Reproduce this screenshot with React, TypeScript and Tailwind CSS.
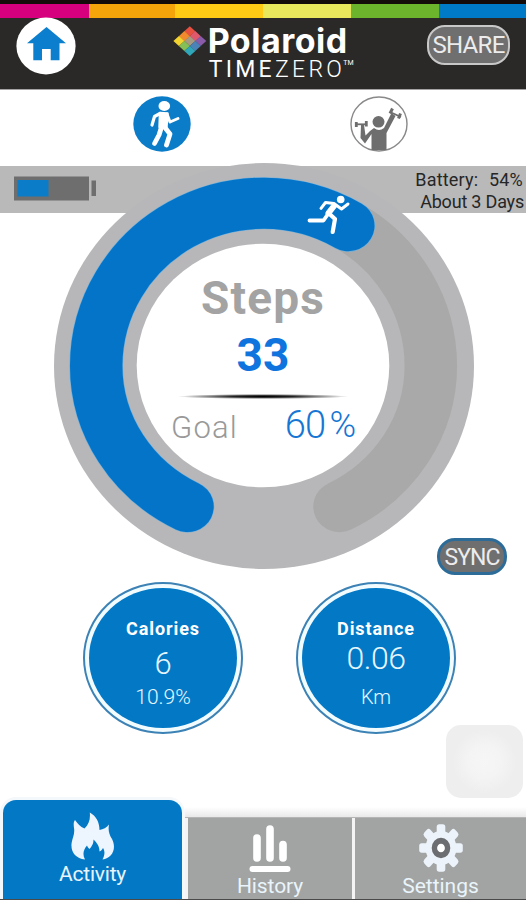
import type { ReactNode } from 'react';

const STRIPES = ['bg-[#d6007f]', 'bg-[#f5a50a]', 'bg-[#ffcb14]', 'bg-[#e9e85c]', 'bg-[#6cb42c]', 'bg-[#007ac6]'];

function HomeIcon() {
  return (
    <svg viewBox="0 0 60 58" className="h-[58px] w-[60px]">
      <ellipse cx="30" cy="29" rx="29.6" ry="28.4" fill="#fff" />
      <path d="M30.5 10 L50 26.3 H43.5 V43.3 H34.7 V32 H26 V43.3 H17.3 V26.3 H11 Z" fill="#0b7fcd" />
    </svg>
  );
}

function PrismLogo() {
  const colors = ['#e8503f', '#e0586c', '#8a5ba8', '#f08a2c', '#a79a80', '#4b83b8', '#f3d32f', '#86bf56', '#2fa7b8'];
  return (
    <svg viewBox="0 0 34 32" className="h-8 w-[34px]">
      <g transform="translate(17 1) scale(1.1 1) rotate(45)">
        {colors.map((color, i) => (
          <rect key={i} x={(i % 3) * 7.07} y={Math.floor(i / 3) * 7.07} width="7.2" height="7.2" fill={color} />
        ))}
      </g>
    </svg>
  );
}

function WalkIcon() {
  return (
    <svg viewBox="0 0 58 56" className="h-14 w-[58px]">
      <ellipse cx="29" cy="28" rx="28.7" ry="27.7" fill="#0b7cc8" />
      <g fill="none" stroke="#fff" strokeLinecap="round" strokeLinejoin="round">
        <ellipse cx="31.3" cy="10" rx="5.8" ry="5" fill="#fff" stroke="none" />
        <path d="M27 17.5 L21.5 20.5 L19 29" strokeWidth="3.2" />
        <path d="M34 18 L37 26 L45 22.5" strokeWidth="3" />
        <path d="M27 17 L34.5 17.5 L33.5 31 L26.5 31 Z" fill="#fff" strokeWidth="2.4" />
        <path d="M28.5 31 L26 39 L21.5 47.5" strokeWidth="4.8" />
        <path d="M31.5 31 L37 38 L33.5 49" strokeWidth="4.8" />
      </g>
    </svg>
  );
}

function WorkoutIcon() {
  return (
    <svg viewBox="0 0 58 56" className="h-14 w-[58px]">
      <ellipse cx="29" cy="28" rx="28" ry="27" fill="#fff" stroke="#8a8888" strokeWidth="1.4" />
      <g fill="none" stroke="#6f6e6e">
        <ellipse cx="28.5" cy="25.8" rx="6" ry="5.8" fill="#6f6e6e" stroke="none" />
        <path d="M21.5 54 V38 L15 47.5 L10.5 42 L11 29 L14 29 L15.5 39.5 L20 35 L24 32 Q29 36 34 32 L41.5 17 L45.5 20 L36.5 37 V54 Z" fill="#6f6e6e" stroke="none" />
        <path d="M5.5 28.3 H17" strokeWidth="1.8" />
        <path d="M6.3 26 V31 M16.3 25 V30.5" strokeWidth="2.8" />
        <path d="M40 16 L51 21" strokeWidth="1.8" />
        <path d="M42.5 12.5 L40 17.5 M50.5 17.5 L48.5 22.5" strokeWidth="3" />
      </g>
    </svg>
  );
}

function Battery() {
  return (
    <svg viewBox="0 0 84 26" className="mt-[10px] ml-[13px] h-[26px] w-[84px]">
      <rect x="1" y="0.5" width="75" height="24" fill="#6e6e6e" />
      <rect x="4.5" y="4" width="31" height="16.5" fill="#0b7cc8" />
      <rect x="78.5" y="4.5" width="4.5" height="15.5" fill="#6e6e6e" />
    </svg>
  );
}

function Dial() {
  const progress = 'M-76 144.5 A167.3 162.2 0 0 1 -167.3 0 A167.3 167.3 0 0 1 84.8 -144.2';
  return (
    <svg viewBox="0 163 526 406" className="col-start-1 row-start-1 h-[406px] w-[526px]">
      <ellipse cx="264" cy="366" rx="210" ry="203" fill="#b7b7b9" />
      <ellipse cx="263" cy="365.5" rx="126.3" ry="121.8" fill="#fff" />
      <g transform="translate(263.5 366) scale(1 0.973)" fill="none" strokeLinecap="round">
        <path d="M84.8 -144.2 A167.3 167.3 0 0 1 167.3 0 A167.3 162.2 0 0 1 76 144.5" stroke="#a9a9a9" strokeWidth="52.5" />
        <path d={progress} stroke="#6fb0dc" strokeWidth="53.6" />
        <path d={progress} stroke="#0374c8" strokeWidth="52.4" />
      </g>
      <g fill="none" stroke="#fff" strokeLinecap="round" strokeLinejoin="round">
        <circle cx="340.7" cy="199.5" r="3.8" fill="#fff" stroke="none" />
        <path d="M321 208.3 L325.5 202.5 L334 203.5 L341.5 209 L348 204" strokeWidth="3" />
        <path d="M334 206 L328.5 213" strokeWidth="6" />
        <path d="M328 214 L323.5 220.5 L309.5 220.5" strokeWidth="3.8" />
        <path d="M329 213.5 L335 219 L332.7 232" strokeWidth="4.2" />
      </g>
    </svg>
  );
}

function Stat({ title, children }: { title: string; children: ReactNode }) {
  return (
    <div className="h-[152px] w-[160px] rounded-[50%] border-2 border-[#3d82b5] bg-[#f2fcff] p-[4px]">
      <div className="flex h-full flex-col items-center rounded-[50%] bg-[#0379c6] pt-[31px] text-[#e6f7ff]">
        <h3 className="text-[18px] leading-[20px] font-bold tracking-[0.9px] text-white">{title}</h3>
        {children}
      </div>
    </div>
  );
}

function FlameIcon() {
  return (
    <svg viewBox="0 0 44 48" className="h-12 w-11">
      <path
        d="M18.8 0.5 C25 4 28.5 10 28.5 18 C32 17.5 36 15.5 38 12.5 C37 18 38 22 41 27 C46 37 41 46 31.5 47.5 C34 43 34 39 32 36 C31 38 30 39 28.5 39.5 C28.5 34 26 31 22.5 27.5 C22.5 32 21 34 18.5 37 C17.5 36 16.5 35 16 33.5 C12 38 11.5 43 14 47.5 C4 46.5 -1 39 0.8 30 C1.5 26 4 22 3 16 C2.5 12 2.5 10 4 8 C7 12 9 14.5 13.5 16.5 C18 12 19.5 7 18.8 0.5 Z"
        fill="#edf5ff"
      />
    </svg>
  );
}

function ChartIcon() {
  return (
    <svg viewBox="0 0 44 50" className="h-[50px] w-11">
      <g stroke="#fff" strokeLinecap="round">
        <path d="M9 14 V34 M22 5 V34 M35 20.5 V34" strokeWidth="7.6" />
        <path d="M4.5 45 H39.5" strokeWidth="6" />
      </g>
    </svg>
  );
}

function GearIcon() {
  return (
    <svg viewBox="0 0 44 48" className="h-12 w-11">
      <g transform="translate(22 24) scale(1 1.09)">
        {[0, 45, 90, 135].map((a) => (
          <rect key={a} x="-4.3" y="-21.8" width="8.6" height="43.6" rx="2.5" fill="#edf3fb" transform={`rotate(${a})`} />
        ))}
        <circle r="15.5" fill="#edf3fb" />
        <circle r="6.6" fill="#fff" stroke="#6b6d70" strokeWidth="5.4" />
      </g>
    </svg>
  );
}

export default function App() {
  return (
    <div className="relative flex h-[900px] w-[526px] flex-col overflow-hidden bg-white font-['Roboto',sans-serif]">
      <header className="h-[90px] border-b border-[#a5a3a4] bg-[#2a2928]">
        <div className="grid h-[18px] grid-cols-[89px_86px_88px_88px_88px_87px] border-t-[4px] border-[#130c0b]">
          {STRIPES.map((stripe) => (
            <div key={stripe} className={stripe} />
          ))}
        </div>
        <div className="flex items-start">
          <button className="-mt-px ml-4">
            <HomeIcon />
          </button>
          <div className="mt-[7px] ml-[97px] flex w-[182px]">
            <PrismLogo />
            <div className="w-[150px] whitespace-nowrap text-white">
              <div className="ml-px font-['Inter',sans-serif] text-[34px] leading-[32px] font-bold tracking-[0.5px]">Polaroid</div>
              <div className="-mt-px ml-0.5 flex text-[23px] leading-[27px] tracking-[3.3px]">
                <span>TIME</span>
                <span className="font-light">ZERO</span>
                <span className="-ml-0.5 text-[7px] leading-[14px] tracking-normal">TM</span>
              </div>
            </div>
          </div>
          <button className="mt-[7px] ml-[72px] h-10 w-[83px] rounded-[18px] border-2 border-[#c9c8c8] bg-[#706f70] text-[24px] leading-[37px] tracking-[-0.7px] text-[#ececec]">
            SHARE
          </button>
        </div>
      </header>

      <nav className="flex h-[73px] items-start justify-between pt-[6px] pr-[118px] pl-[133px]">
        <WalkIcon />
        <WorkoutIcon />
      </nav>

      <section className="grid h-[419px] grid-cols-1 grid-rows-1">
        <div className="col-start-1 row-start-1 mt-[3px] flex h-[47px] justify-between bg-[#b9b9ba]">
          <Battery />
          <div className="pt-[3px] pr-[3px] text-right text-[18px] leading-[22px] text-[#262626]">
            <p className="tracking-[0.2px]">
              Battery: <span className="ml-1.5">54%</span>
            </p>
            <p className="-mr-px tracking-[-0.2px]">About 3 Days</p>
          </div>
        </div>
        <Dial />
        <div className="col-start-1 row-start-1 flex flex-col items-center pt-[113px]">
          <h1 className="text-[46px] leading-[45px] font-bold tracking-[1.2px] text-[#a3a3a3]">Steps</h1>
          <div className="mt-[11px] text-[46px] leading-[46px] font-bold text-[#0f74dd]">33</div>
          <div className="mt-[16px] h-[5px] w-[170px] bg-[radial-gradient(closest-side,#000_0%,#222_35%,transparent_100%)]" />
          <div className="mt-[8px] flex w-[184px] items-baseline justify-between leading-[36px]">
            <span className="text-[31px] font-light tracking-[1.2px] text-[#999999]">Goal</span>
            <span className="-mr-px flex gap-1 text-[38px] font-light text-[#1676d4]">
              <span className="tracking-[-0.8px]">60</span>
              <span className="text-[36px]">%</span>
            </span>
          </div>
        </div>
        <button className="col-start-1 row-start-1 mr-[19px] mb-[7px] h-[37px] w-[70px] self-end justify-self-end rounded-[18px] border-[3px] border-[#2d6c98] bg-[#706f70] text-[23px] leading-[34px] tracking-[-0.9px] text-[#ececec]">
          SYNC
        </button>
      </section>

      <section className="flex gap-[53px] pl-[83px]">
        <Stat title="Calories">
          <p className="mt-[9px] text-[31px] leading-[31px] font-light">6</p>
          <p className="mt-[8px] text-[21px] leading-[21px] font-light">10.9%</p>
        </Stat>
        <Stat title="Distance">
          <p className="mt-[4px] text-[32px] leading-[31px] font-light tracking-[-0.5px]">0.06</p>
          <p className="mt-[13px] text-[20px] leading-[21px] font-light">Km</p>
        </Stat>
      </section>

      <div className="absolute top-[725px] left-[446px] h-[73px] w-[77px] rounded-[15px] bg-[radial-gradient(circle,#f6f6f6_0%,#f4f4f4_30%,#eeeeee_60%)]" />

      <footer className="mt-auto flex items-end border-b border-[#4a4a4a] text-[21px] leading-[24px] text-[#eaf4fb]">
        <button className="flex h-[102px] w-[185px] flex-col items-center rounded-t-[16px] border-x-[3px] border-t-[3px] border-[#f4f8fa] bg-[#0379c6] pt-[12px]">
          <FlameIcon />
          <span className="mt-0.5 tracking-[-0.2px]">Activity</span>
        </button>
        <div className="flex flex-1 flex-col">
          <div className="h-[10px] bg-linear-to-b from-white to-[#e9e9e9]" />
          <div className="flex h-[82px] gap-[3px] border-t border-[#b5b5b5] bg-[#f4f4f4] pl-[3px]">
            <button className="flex w-[164px] flex-col items-center bg-[#a2a4a3] pt-[6px]">
              <ChartIcon />
              <span className="tracking-[-0.1px]">History</span>
            </button>
            <button className="flex flex-1 flex-col items-center bg-[#a2a4a3] pt-[6px]">
              <GearIcon />
              <span className="mt-0.5">Settings</span>
            </button>
          </div>
        </div>
      </footer>
    </div>
  );
}
